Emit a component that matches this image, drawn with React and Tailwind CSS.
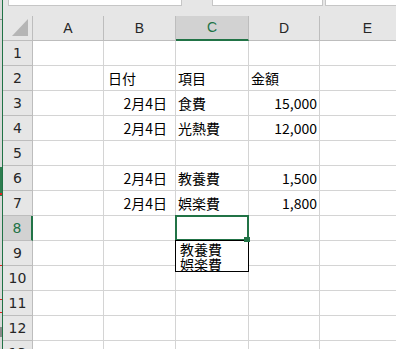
import React from 'react';

const COLS = [
  { key: 'A', w: 'w-[71px]' },
  { key: 'B', w: 'w-[72px]' },
  { key: 'C', w: 'w-[73px]' },
  { key: 'D', w: 'w-[71px]' },
  { key: 'E', w: 'w-[96px]' },
];

const ROWS = [
  {},
  { B: '日付', C: '項目', D: '金額' },
  { B: '2月4日', C: '食費', D: '15,000' },
  { B: '2月4日', C: '光熱費', D: '12,000' },
  {},
  { B: '2月4日', C: '教養費', D: '1,500' },
  { B: '2月4日', C: '娯楽費', D: '1,800' },
  {},
  {},
  {},
  {},
  {},
  {},
];

const cellFont = { fontFamily: '"Noto Sans CJK JP", "Noto Sans", sans-serif' };

function cellAlign(col, value) {
  if (!value) return '';
  if (col === 'B' && /\d/.test(value)) return 'justify-end pr-[8px]';
  if (col === 'D' && /\d/.test(value)) return 'justify-end pr-[2px]';
  if (col === 'B') return 'justify-start pl-[4px]';
  return 'justify-start pl-[2px]';
}

function LeftEdge() {
  return (
    <div className="relative w-[3px] shrink-0 bg-[#d9d9d9] border-r border-[#217346]">
      <div className="absolute left-0 top-[19px] w-[2px] h-[1px] bg-[#8a8a8a]" />
      <div className="absolute left-0 top-[167px] w-[2px] h-[29px] bg-[#2e7d4f]" />
      <div className="absolute left-0 top-[193px] w-[2px] h-[2px] bg-[#e02020]" />
      <div className="absolute left-0 top-[265px] w-[2px] h-[1px] bg-[#e02020]" />
      <div className="absolute left-0 top-[299px] w-[2px] h-[1px] bg-[#e02020]" />
      <div className="absolute left-0 top-[312px] w-[2px] h-[1px] bg-[#e02020]" />
      <div className="absolute left-0 top-[327px] w-[2px] h-[10px] bg-[#8a8a8a]" />
    </div>
  );
}

function TopStrip() {
  return (
    <div className="h-[16px] flex items-start bg-[#e6e6e6] shrink-0">
      <div className="ml-[5px] w-[174px] h-[6px] bg-white border border-t-0 border-[#c6c6c6]" />
      <div className="ml-[30px] w-[111px] h-[6px] bg-white border border-t-0 border-[#c6c6c6]" />
      <div className="ml-[2px] flex-1 h-[6px] bg-white border border-t-0 border-r-0 border-[#c6c6c6]" />
    </div>
  );
}

function HeaderRow() {
  return (
    <div className="flex h-[25px] shrink-0 bg-[#e6e6e6]">
      <div className="relative w-[30px] shrink-0 border-r border-b border-[#bdbdbd]">
        <svg className="absolute left-[9px] top-[3px]" width="16" height="17" viewBox="0 0 16 17">
          <polygon points="16,0 16,17 0,17" fill="#b5b5b5" />
        </svg>
      </div>
      {COLS.map((c) =>
        c.key === 'C' ? (
          <div
            key={c.key}
            className={`${c.w} shrink-0 flex items-center justify-center bg-[#d2d2d2] border-r border-[#bdbdbd] border-b-2 border-b-[#217346] text-[14px] text-[#217346]`}
            style={{ fontFamily: '"Liberation Sans", Arial, sans-serif' }}
          >
            {c.key}
          </div>
        ) : (
          <div
            key={c.key}
            className={`${c.w} shrink-0 flex items-center justify-center border-r border-b border-[#bdbdbd] text-[14px] text-[#262626]`}
            style={{ fontFamily: '"Liberation Sans", Arial, sans-serif' }}
          >
            {c.key}
          </div>
        )
      )}
    </div>
  );
}

function RowHeader({ n }) {
  const selected = n === 8;
  return (
    <div
      className={
        selected
          ? 'w-[30px] shrink-0 flex items-center justify-center bg-[#d2d2d2] border-b border-[#bdbdbd] border-r-2 border-r-[#217346] text-[14px] text-[#217346]'
          : 'w-[30px] shrink-0 flex items-center justify-center bg-[#e6e6e6] border-r border-b border-[#bdbdbd] text-[14px] text-[#262626]'
      }
      style={{ fontFamily: '"DejaVu Sans", sans-serif' }}
    >
      {n}
    </div>
  );
}

function SelectedCell() {
  return (
    <>
      <div className="absolute left-[-1px] top-[-1px] w-[74px] h-[26px] border-2 border-[#217346] z-10" />
      <div
        className="absolute left-[-1px] top-[24px] w-[74px] h-[32px] bg-white border border-black z-20 pt-[1px] pl-[4px] text-[14px] leading-[15px] text-black"
        style={cellFont}
      >
        <div>教養費</div>
        <div>娯楽費</div>
      </div>
      <div className="absolute left-[68px] top-[21px] w-[6px] h-[5px] bg-[#217346] z-30" />
    </>
  );
}

export default function App() {
  return (
    <div className="w-[396px] h-[349px] overflow-hidden bg-white flex">
      <LeftEdge />
      <div className="flex-1 flex flex-col overflow-hidden">
        <TopStrip />
        <HeaderRow />
        {ROWS.map((row, i) => {
          const n = i + 1;
          return (
            <div key={n} className="flex h-[25px] shrink-0">
              <RowHeader n={n} />
              {COLS.map((c) => {
                const value = row[c.key];
                const isSel = n === 8 && c.key === 'C';
                return (
                  <div
                    key={c.key}
                    className={`relative ${c.w} shrink-0 flex items-center border-r border-b border-[#d4d4d4] text-[14px] leading-none text-black whitespace-nowrap ${cellAlign(c.key, value)}`}
                    style={cellFont}
                  >
                    {value}
                    {isSel && <SelectedCell />}
                  </div>
                );
              })}
            </div>
          );
        })}
      </div>
    </div>
  );
}
